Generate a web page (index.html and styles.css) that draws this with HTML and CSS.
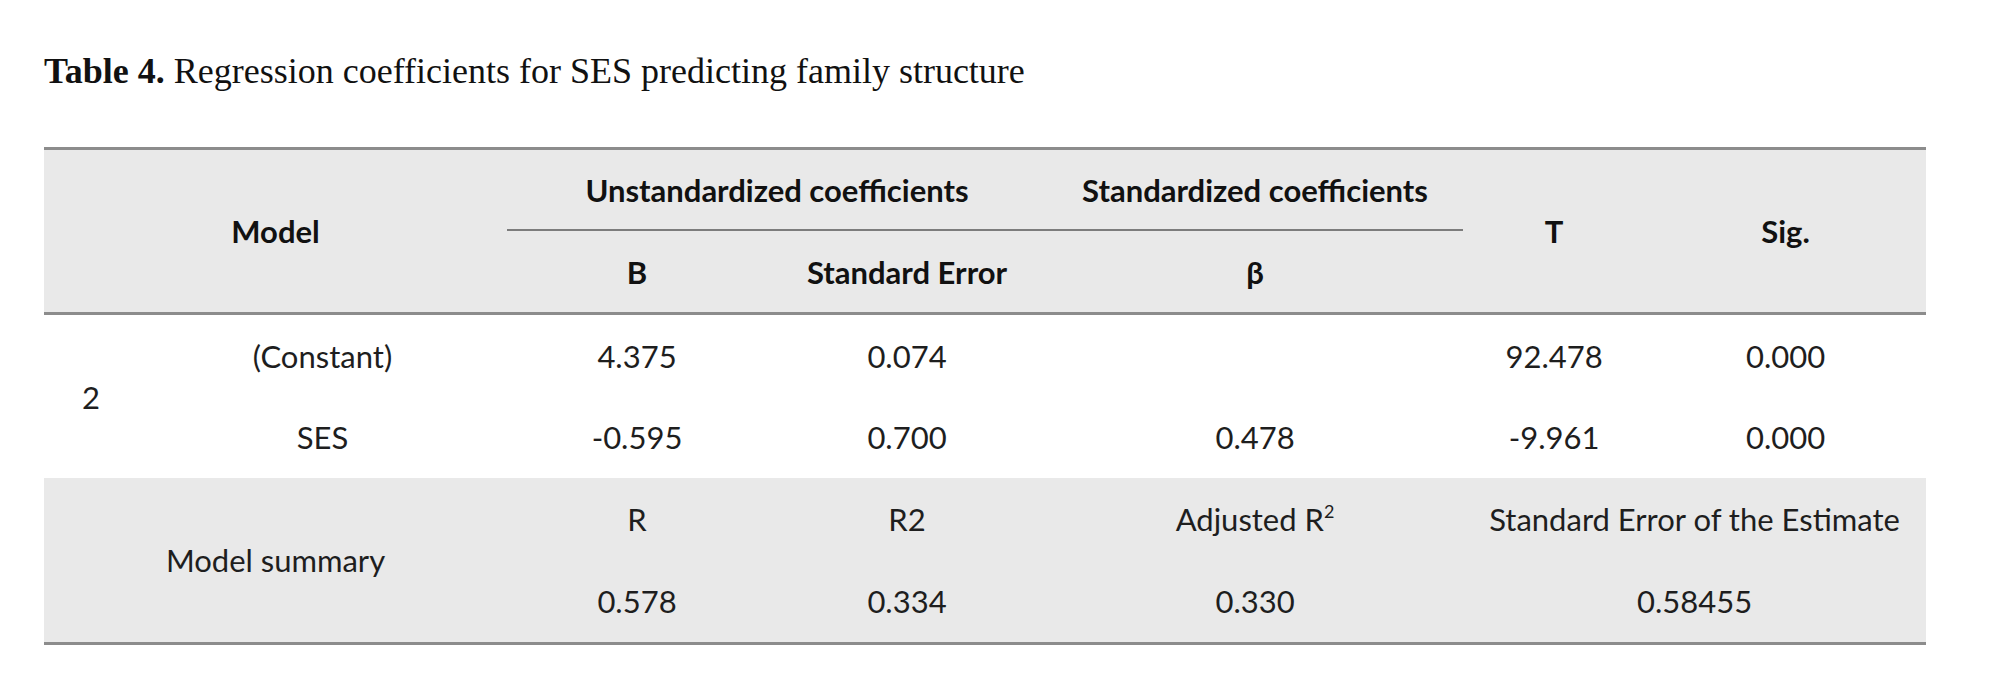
FILE: index.html
```html
<!DOCTYPE html>
<html lang="en">
<head>
<meta charset="utf-8">
<title>Table 4</title>
<link rel="stylesheet" href="styles.css">
</head>
<body>
<div class="page">
  <p class="caption"><b>Table 4.</b> Regression coefficients for SES predicting family structure</p>
  <table class="reg">
    <colgroup>
      <col class="c-num"><col class="c-name"><col class="c-b"><col class="c-se"><col class="c-beta"><col class="c-t"><col class="c-sig">
    </colgroup>
    <thead>
      <tr class="h1">
        <th colspan="2" rowspan="2" class="hb">Model</th>
        <th colspan="2" class="sub">Unstandardized coefficients</th>
        <th class="sub">Standardized coefficients</th>
        <th rowspan="2" class="hb">T</th>
        <th rowspan="2" class="hb">Sig.</th>
      </tr>
      <tr class="h2">
        <th class="hb">B</th>
        <th class="hb">Standard Error</th>
        <th class="hb">β</th>
      </tr>
    </thead>
    <tbody>
      <tr class="r1">
        <td rowspan="2">2</td>
        <td>(Constant)</td>
        <td>4.375</td>
        <td>0.074</td>
        <td></td>
        <td>92.478</td>
        <td>0.000</td>
      </tr>
      <tr class="r2">
        <td>SES</td>
        <td>-0.595</td>
        <td>0.700</td>
        <td>0.478</td>
        <td>-9.961</td>
        <td>0.000</td>
      </tr>
      <tr class="s1 shade">
        <td colspan="2" rowspan="2">Model summary</td>
        <td>R</td>
        <td>R2</td>
        <td>Adjusted R<sup>2</sup></td>
        <td colspan="2">Standard Error of the Estimate</td>
      </tr>
      <tr class="s2 shade">
        <td>0.578</td>
        <td>0.334</td>
        <td>0.330</td>
        <td colspan="2">0.58455</td>
      </tr>
    </tbody>
  </table>
</div>
</body>
</html>
```

FILE: styles.css
```css
html, body {
  margin: 0;
  padding: 0;
  background: #ffffff;
}

.page {
  padding: 51px 74px 0 44px;
}

.caption {
  margin: 0 0 56px 0;
  font-family: "Liberation Serif", "Times New Roman", serif;
  font-size: 36px;
  line-height: 40px;
  color: #111111;
  white-space: nowrap;
}

.caption b {
  font-weight: bold;
}

.reg {
  width: 1882px;
  table-layout: fixed;
  border-collapse: separate;
  border-spacing: 0;
  border-top: 3px solid #8c8c8c;
  border-bottom: 3px solid #8c8c8c;
  font-family: Lato, "Liberation Sans", sans-serif;
  font-size: 31px;
  color: #1e1e1e;
}

.c-num { width: 94px; }
.c-name { width: 369px; }
.c-b { width: 260px; }
.c-se { width: 280px; }
.c-beta { width: 416px; }
.c-t { width: 182px; }
.c-sig { width: 281px; }

.reg th,
.reg td {
  padding: 0;
  text-align: center;
  vertical-align: middle;
}

.reg thead th {
  background: #e9e9e9;
  font-weight: bold;
  color: #111111;
}

.reg th.sub {
  border-bottom: 2px solid #7c7c7c;
}

.reg th.hb {
  border-bottom: 3px solid #8c8c8c;
}

.h1 { height: 81px; }
.h2 { height: 84px; }
.r1 { height: 81px; }
.r2 { height: 82px; }
.s1 { height: 82px; }
.s2 { height: 82px; }

.shade td {
  background: #e9e9e9;
}

.reg sup {
  font-size: 58%;
  vertical-align: 0.7em;
  line-height: 0;
}
```
